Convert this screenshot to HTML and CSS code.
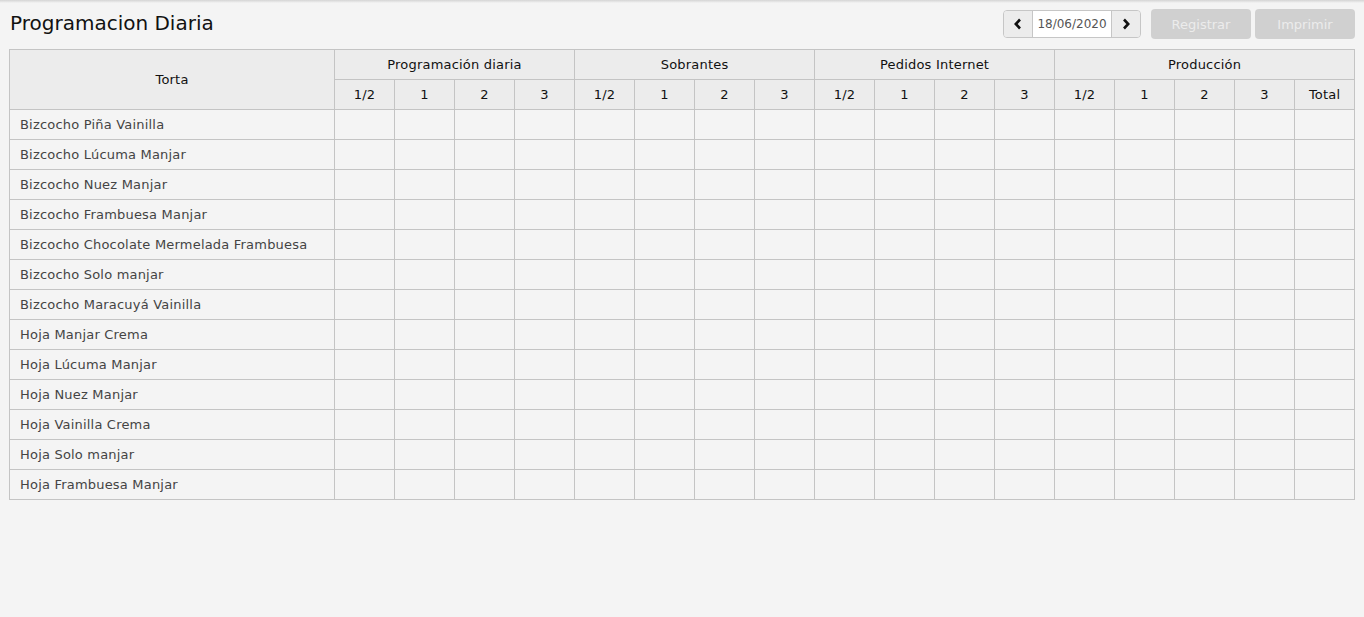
FILE: index.html
```html
<!DOCTYPE html>
<html lang="es">
<head>
<meta charset="utf-8">
<title>Programacion Diaria</title>
<link rel="stylesheet" href="styles.css">
</head>
<body>
<div class="topshadow"></div>
<div class="page">
  <div class="toolbar">
    <h1 class="title">Programacion Diaria</h1>
    <div class="actions">
      <div class="datepicker">
        <button class="dp-btn" aria-label="Anterior">
          <svg width="10" height="12" viewBox="0 0 10 12"><path d="M7 1.5 L2.8 6 L7 10.5" fill="none" stroke="#111" stroke-width="2.6" stroke-linejoin="miter"/></svg>
        </button>
        <div class="dp-value">18/06/2020</div>
        <button class="dp-btn" aria-label="Siguiente">
          <svg width="10" height="12" viewBox="0 0 10 12"><path d="M3 1.5 L7.2 6 L3 10.5" fill="none" stroke="#111" stroke-width="2.6" stroke-linejoin="miter"/></svg>
        </button>
      </div>
      <button class="btn" disabled>Registrar</button>
      <button class="btn" disabled>Imprimir</button>
    </div>
  </div>
  <table class="grid">
    <colgroup>
      <col class="c-name">
      <col class="c-num"><col class="c-num"><col class="c-num"><col class="c-num">
      <col class="c-num"><col class="c-num"><col class="c-num"><col class="c-num">
      <col class="c-num"><col class="c-num"><col class="c-num"><col class="c-num">
      <col class="c-num"><col class="c-num"><col class="c-num"><col class="c-num"><col class="c-num">
    </colgroup>
    <thead>
      <tr>
        <th rowspan="2">Torta</th>
        <th colspan="4">Programación diaria</th>
        <th colspan="4">Sobrantes</th>
        <th colspan="4">Pedidos Internet</th>
        <th colspan="5">Producción</th>
      </tr>
      <tr>
        <th>1/2</th><th>1</th><th>2</th><th>3</th>
        <th>1/2</th><th>1</th><th>2</th><th>3</th>
        <th>1/2</th><th>1</th><th>2</th><th>3</th>
        <th>1/2</th><th>1</th><th>2</th><th>3</th><th>Total</th>
      </tr>
    </thead>
    <tbody id="rows"></tbody>
  </table>
</div>
<script src="app.js"></script>
</body>
</html>
```
FILE: app.js
```js
var names = [
  "Bizcocho Piña Vainilla",
  "Bizcocho Lúcuma Manjar",
  "Bizcocho Nuez Manjar",
  "Bizcocho Frambuesa Manjar",
  "Bizcocho Chocolate Mermelada Frambuesa",
  "Bizcocho Solo manjar",
  "Bizcocho Maracuyá Vainilla",
  "Hoja Manjar Crema",
  "Hoja Lúcuma Manjar",
  "Hoja Nuez Manjar",
  "Hoja Vainilla Crema",
  "Hoja Solo manjar",
  "Hoja Frambuesa Manjar"
];
var tb = document.getElementById("rows");
names.forEach(function (n) {
  var tr = document.createElement("tr");
  var td = document.createElement("td");
  td.className = "name";
  td.textContent = n;
  tr.appendChild(td);
  for (var i = 0; i < 17; i++) {
    tr.appendChild(document.createElement("td"));
  }
  tb.appendChild(tr);
});
```
FILE: styles.css
```css
html, body {
  margin: 0;
  padding: 0;
}
body {
  background: #f4f4f4;
  font-family: "DejaVu Sans", "Liberation Sans", sans-serif;
  color: #222;
  height: 617px;
}
.topshadow {
  height: 3px;
  background: linear-gradient(#d4d4d4, #f4f4f4);
}
.page {
  padding: 0 9px;
}
.toolbar {
  display: flex;
  justify-content: space-between;
  align-items: flex-start;
  height: 46px;
}
.title {
  margin: 6px 0 0 1px;
  font-size: 20px;
  font-weight: normal;
  color: #111;
  line-height: 28px;
}
.actions {
  display: flex;
  gap: 4px;
  margin-top: 6px;
}
.datepicker {
  display: flex;
  height: 28px;
  margin-top: 1px;
  margin-right: 6px;
  border: 1px solid #c6c6c6;
  border-radius: 4px;
  overflow: hidden;
  box-sizing: border-box;
}
.dp-btn {
  width: 28px;
  height: 26px;
  padding: 0;
  border: none;
  background: #ececec;
  display: flex;
  align-items: center;
  justify-content: center;
}
.dp-value {
  width: 78px;
  background: #fff;
  border-left: 1px solid #c6c6c6;
  border-right: 1px solid #c6c6c6;
  font-size: 12px;
  color: #555;
  display: flex;
  align-items: center;
  justify-content: center;
}
.btn {
  width: 100px;
  height: 30px;
  border: none;
  border-radius: 4px;
  background: #d0d0d0;
  color: #ececec;
  font-family: inherit;
  font-size: 13px;
  padding: 0;
}
.grid {
  border-collapse: collapse;
  table-layout: fixed;
  width: 1346px;
  font-size: 13px;
  letter-spacing: 0.2px;
}
.c-name {
  width: 325px;
}
.c-num {
  width: 60px;
}
.grid th, .grid td {
  border: 1px solid #c4c4c4;
  height: 30px;
  padding: 0;
  box-sizing: border-box;
}
.grid th {
  background: #ececec;
  font-weight: normal;
  color: #111;
  text-align: center;
}
.grid td.name {
  padding-left: 10px;
  color: #444;
  text-align: left;
  white-space: nowrap;
}
```
